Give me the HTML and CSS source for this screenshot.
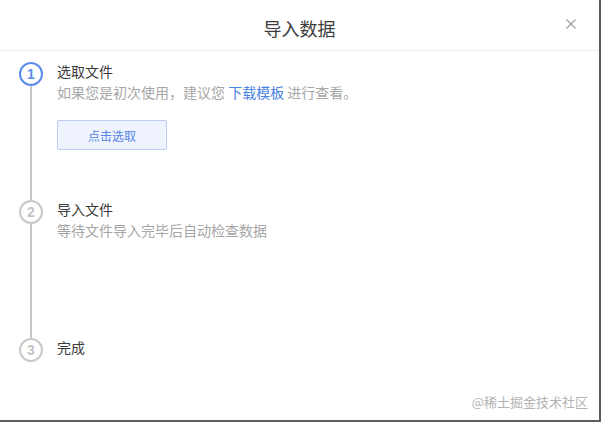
FILE: index.html
```html
<!DOCTYPE html>
<html lang="zh-CN">
<head>
    <meta charset="UTF-8">
    <meta name="viewport" content="width=device-width, initial-scale=1.0">
    <title>导入数据</title>
    <link rel="stylesheet" href="styles.css">
</head>
<body>

<!-- Import dialog -->
<div class="dialog">
    <div class="dialog-header">
        <h2 class="dialog-title">导入数据</h2>
        <span class="dialog-close">
            <svg width="10" height="10" viewBox="0 0 10 10">
                <path d="M0.5 0.5 L9.5 9.5 M9.5 0.5 L0.5 9.5" stroke="#9a9a9a" stroke-width="1.1" fill="none"/>
            </svg>
        </span>
    </div>

    <div class="steps">
        <div class="step">
            <div class="step-rail">
                <div class="step-icon active">1</div>
                <div class="step-line"></div>
            </div>
            <div class="step-body">
                <div class="step-title">选取文件</div>
                <div class="step-desc">如果您是初次使用，建议您 <a class="link" href="#">下载模板</a> 进行查看。</div>
                <button type="button" class="pick-btn">点击选取</button>
            </div>
        </div>

        <div class="step">
            <div class="step-rail">
                <div class="step-icon">2</div>
                <div class="step-line"></div>
            </div>
            <div class="step-body">
                <div class="step-title">导入文件</div>
                <div class="step-desc">等待文件导入完毕后自动检查数据</div>
            </div>
        </div>

        <div class="step last">
            <div class="step-rail">
                <div class="step-icon">3</div>
            </div>
            <div class="step-body">
                <div class="step-title">完成</div>
            </div>
        </div>
    </div>

    <div class="watermark">@稀土掘金技术社区</div>
</div>

</body>
</html>
```

FILE: styles.css
```css
/* styles.css */
body {
    margin: 0;
    font-family: "Noto Sans CJK SC", "Liberation Sans", sans-serif;
    background-color: #fff;
}

.dialog {
    position: relative;
    width: 601px;
    height: 422px;
    box-sizing: border-box;
    border-right: 2px solid #5c5c5c;
    border-bottom: 2px solid #5c5c5c;
    background-color: #fff;
}

.dialog-header {
    padding: 16px 0 10px;
    border-bottom: 1px solid #ededed;
    text-align: center;
}

.dialog-title {
    margin: 0;
    font-size: 18px;
    font-weight: normal;
    line-height: 24px;
    color: #3c3c3c;
}

.dialog-close {
    position: absolute;
    top: 19px;
    right: 23px;
    width: 10px;
    height: 10px;
    display: flex;
    cursor: pointer;
}

.steps {
    padding: 11px 0 0 19px;
}

.step {
    display: flex;
    height: 138px;
}

.step.last {
    height: auto;
}

.step-rail {
    width: 24px;
    display: flex;
    flex-direction: column;
    align-items: center;
}

.step-icon {
    width: 24px;
    height: 24px;
    box-sizing: border-box;
    border: 2px solid #c9c9c9;
    border-radius: 50%;
    display: flex;
    align-items: center;
    justify-content: center;
    font-family: "Liberation Sans", sans-serif;
    font-size: 14px;
    font-weight: bold;
    color: #c4c4c4;
}

.step-icon.active {
    border-color: #5b8cea;
    color: #5b8cea;
}

.step-line {
    flex: 1;
    width: 2px;
    background-color: #c6c6c6;
}

.step-body {
    margin-top: -1px;
    margin-left: 14px;
}

.step-title {
    font-size: 14px;
    line-height: 21px;
    color: #3a3a3a;
}

.step-desc {
    font-size: 14px;
    line-height: 21px;
    color: #a6a6a6;
}

.link {
    color: #4a82e4;
    text-decoration: none;
}

.pick-btn {
    display: block;
    margin-top: 17px;
    width: 110px;
    height: 30px;
    padding: 0;
    border: 1px solid #bccdf3;
    border-radius: 2px;
    background-color: #eef3fe;
    color: #5585e3;
    font-family: "Noto Sans CJK SC", sans-serif;
    font-size: 12px;
    cursor: pointer;
}

.watermark {
    position: absolute;
    right: 11px;
    bottom: 9px;
    font-size: 13px;
    line-height: 18px;
    color: #b3b3b3;
}
```
